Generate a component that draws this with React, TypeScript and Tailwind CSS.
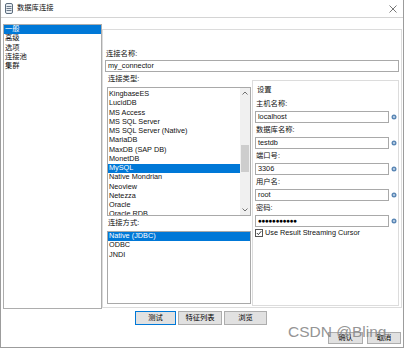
import React from "react";

const font = { fontFamily: '"Liberation Sans", "Noto Sans CJK SC", sans-serif' };

const typeItems = [
  "KingbaseES",
  "LucidDB",
  "MS Access",
  "MS SQL Server",
  "MS SQL Server (Native)",
  "MariaDB",
  "MaxDB (SAP DB)",
  "MonetDB",
  "MySQL",
  "Native Mondrian",
  "Neoview",
  "Netezza",
  "Oracle",
  "Oracle RDB",
];

const methodItems = ["Native (JDBC)", "ODBC", "JNDI"];
const treeItems = ["一般", "高级", "选项", "连接池", "集群"];

const fields = [
  { label: "主机名称:", value: "localhost" },
  { label: "数据库名称:", value: "testdb" },
  { label: "端口号:", value: "3306" },
  { label: "用户名:", value: "root" },
  { label: "密码:", value: "●●●●●●●●●●●", password: true },
];

const VarIcon = () => (
  <svg width="6" height="6" viewBox="0 0 6 6" className="shrink-0">
    <circle cx="3" cy="3" r="2.5" fill="#5b87b5" />
    <circle cx="3" cy="3" r="0.9" fill="#d5e4f2" />
  </svg>
);

const Chevron = ({ up }: { up?: boolean }) => (
  <svg width="6" height="4" viewBox="0 0 6 4">
    <path d={up ? "M0.5 3.5 L3 1 L5.5 3.5" : "M0.5 0.5 L3 3 L5.5 0.5"} fill="none" stroke="#606060" strokeWidth="0.9" />
  </svg>
);

const Btn = ({ label, w, primary }: { label: string; w: string; primary?: boolean }) => (
  <div
    className={`${w} h-full flex items-center justify-center bg-[#e1e1e1] border ${
      primary ? "border-[#0078d7]" : "border-[#adadad]"
    } text-black`}
  >
    {label}
  </div>
);

export default function App() {
  return (
    <div
      className="relative w-[404px] h-[348px] bg-white border-x border-b border-[#9c9c9c] flex flex-col text-[7.3px] text-[#111] overflow-hidden"
      style={font}
    >
      {/* title bar */}
      <div className="h-[18px] shrink-0 flex items-center border-b border-[#d4d4d4] pl-[4px] pr-[6px]">
        <svg width="8" height="11" viewBox="0 0 8 11">
          <rect x="0.5" y="0.5" width="7" height="10" rx="1.5" fill="#e8edf2" stroke="#5d6d7e" />
          <path d="M1.5 3.5 H6.5 M1.5 5.5 H6.5 M1.5 7.5 H6.5" stroke="#5d6d7e" strokeWidth="0.9" />
        </svg>
        <span className="ml-[4px]">数据库连接</span>
        <svg width="8" height="8" viewBox="0 0 8 8" className="ml-auto">
          <path d="M0.5 0.5 L7.5 7.5 M7.5 0.5 L0.5 7.5" stroke="#555" strokeWidth="0.8" />
        </svg>
      </div>

      {/* body */}
      <div className="flex shrink-0 pl-[2px] pt-[6px]">
        <div className="w-[99px] h-[285px] border border-[#adadad] bg-white">
          {treeItems.map((t, i) => (
            <div
              key={t}
              className={`h-[9.3px] flex items-center pl-[1px] ${i === 0 ? "bg-[#0078d7] text-white" : ""}`}
            >
              {t}
            </div>
          ))}
        </div>

        <div className="mt-[5px] w-[300px] h-[279px] border border-[#dcdcdc] bg-white px-[2px] pt-[18px] flex flex-col">
          <div className="h-[12px] flex items-center pl-[1px]">连接名称:</div>
          <div className="h-[12px] border border-[#a9a9a9] flex items-center pl-[2px]">my_connector</div>

          <div className="flex">
            <div className="ml-[2px] w-[144px] flex flex-col">
              <div className="h-[15px] flex items-center pl-[1px]">连接类型:</div>
              <div className="h-[129px] border border-[#a9a9a9] flex overflow-hidden">
                <div className="flex-1 pt-[2px]">
                  {typeItems.map((t) => (
                    <div
                      key={t}
                      className={`h-[9.25px] flex items-center pl-[1px] whitespace-nowrap ${
                        t === "MySQL" ? "bg-[#0078d7] text-white" : ""
                      }`}
                    >
                      {t}
                    </div>
                  ))}
                </div>
                <div className="w-[10px] bg-[#f0f0f0] flex flex-col">
                  <div className="h-[10px] flex items-center justify-center">
                    <Chevron up />
                  </div>
                  <div className="flex-1">
                    <div className="mt-[47px] h-[27px] mx-[1px] bg-[#cdcdcd]" />
                  </div>
                  <div className="h-[10px] flex items-center justify-center">
                    <Chevron />
                  </div>
                </div>
              </div>
              <div className="h-[15px] flex items-center pl-[1px]">连接方式:</div>
              <div className="h-[73px] border border-[#a9a9a9]">
                {methodItems.map((t, i) => (
                  <div
                    key={t}
                    className={`h-[9.3px] flex items-center pl-[1px] ${i === 0 ? "bg-[#0078d7] text-white" : ""}`}
                  >
                    {t}
                  </div>
                ))}
              </div>
            </div>

            <div className="ml-[1px] mt-[8px] w-[147px] h-[226px] border border-[#dcdcdc] pl-[2px] pt-[3px] flex flex-col">
              <div className="h-[13px] flex items-center pl-[2px]">设置</div>
              {fields.map((f) => (
                <div key={f.label} className="h-[26px] flex flex-col">
                  <div className="h-[14px] flex items-center pl-[1px]">{f.label}</div>
                  <div className="h-[12px] flex items-center">
                    <div
                      className={`w-[134px] h-full border border-[#a9a9a9] flex items-center pl-[2px] ${
                        f.password ? "text-[6.5px] tracking-[-0.4px] text-black" : ""
                      }`}
                    >
                      {f.value}
                    </div>
                    <div className="ml-[2px]">
                      <VarIcon />
                    </div>
                  </div>
                </div>
              ))}
              <div className="h-[12px] flex items-center">
                <div className="w-[8px] h-[8px] border border-[#555] bg-white flex items-center justify-center">
                  <svg width="6" height="6" viewBox="0 0 6 6">
                    <path d="M0.8 3 L2.4 4.6 L5.3 1.2" fill="none" stroke="#222" strokeWidth="0.9" />
                  </svg>
                </div>
                <span className="ml-[2px]">Use Result Streaming Cursor</span>
              </div>
            </div>
          </div>
        </div>
      </div>

      {/* buttons */}
      <div className="mt-[2px] h-[14px] shrink-0 flex gap-[2px] pl-[134px]">
        <Btn label="测试" w="w-[41px]" primary />
        <Btn label="特征列表" w="w-[44px]" />
        <Btn label="浏览" w="w-[43px]" />
      </div>
      <div className="mt-[7px] h-[12px] shrink-0 flex justify-end gap-[4px] pr-[2px]">
        <Btn label="确认" w="w-[35px]" />
        <Btn label="取消" w="w-[34px]" />
      </div>

      {/* watermark */}
      <div className="absolute left-[287px] top-[320px] text-[15.5px] text-[#8a8a8a] opacity-90 pointer-events-none whitespace-nowrap">
        CSDN @Bling
      </div>
    </div>
  );
}
